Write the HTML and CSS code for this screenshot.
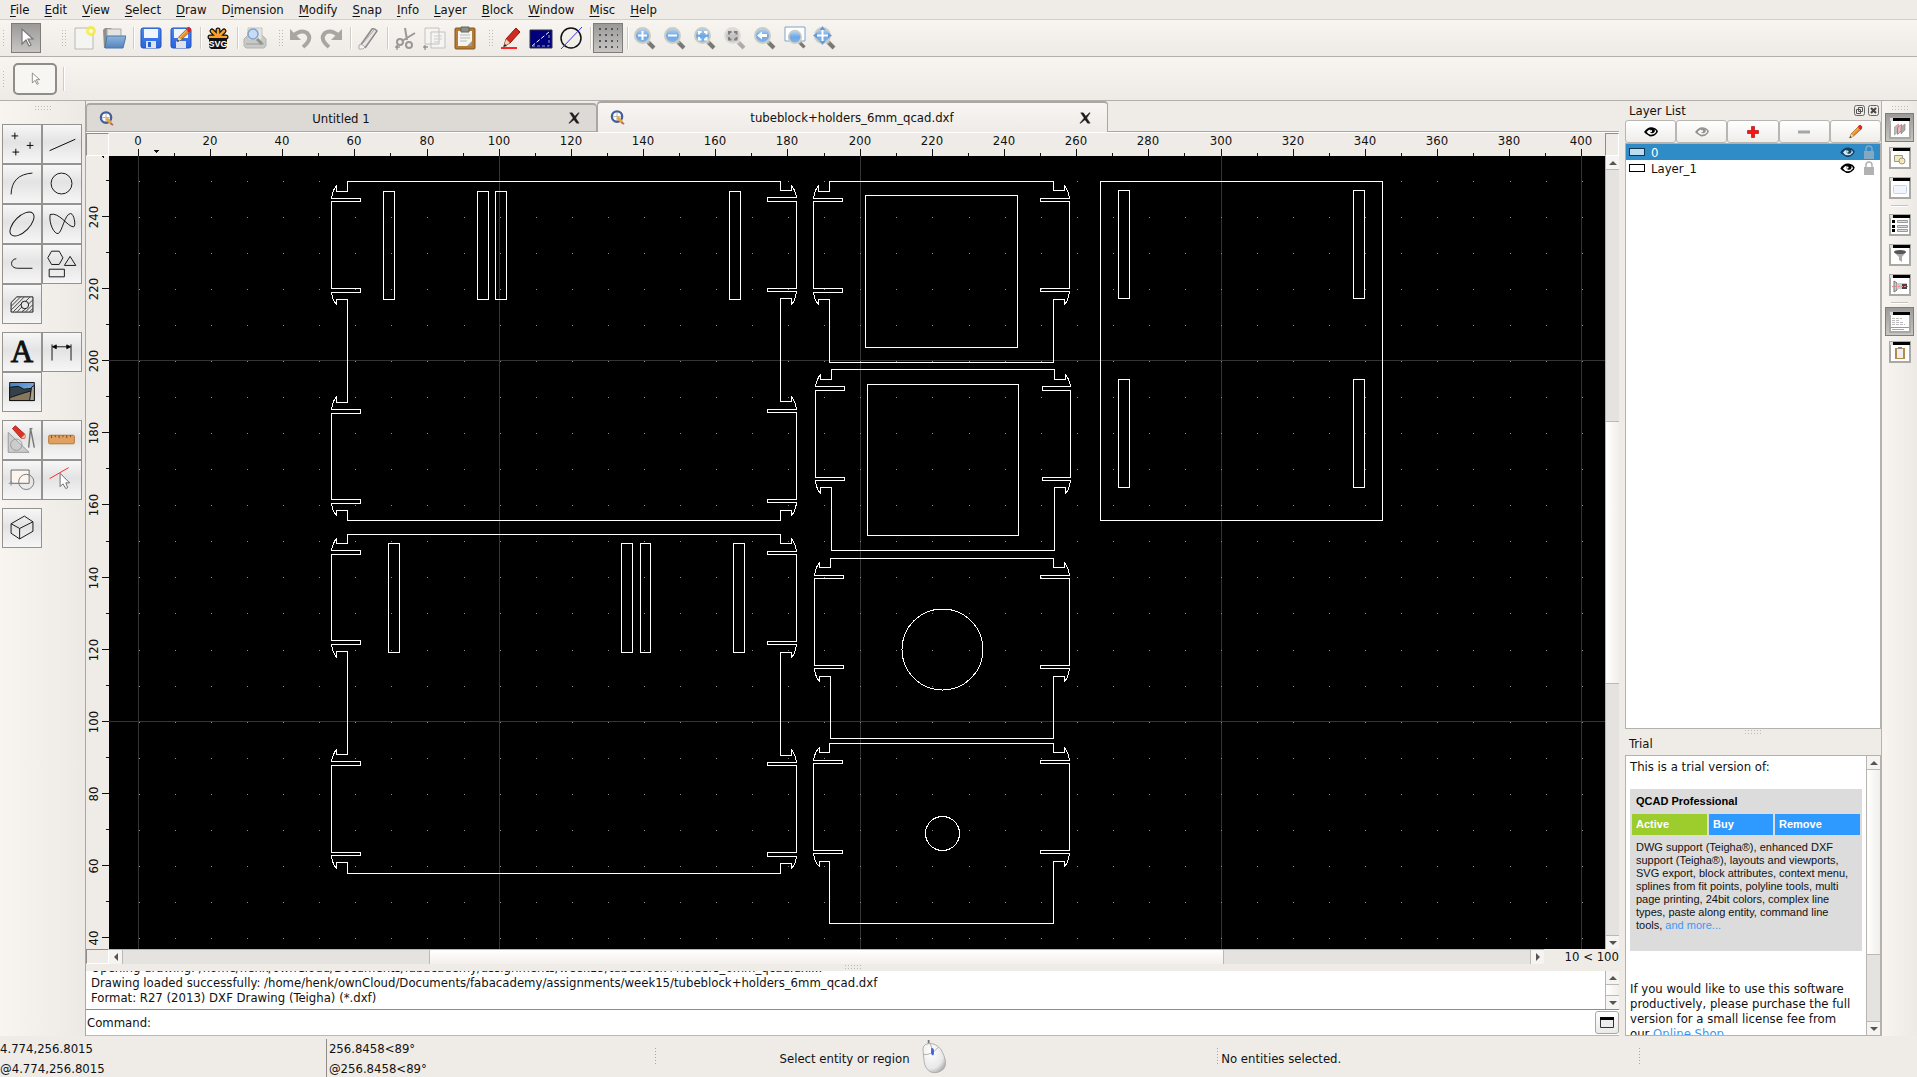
FILE: index.html
```html
<!DOCTYPE html>
<html lang="en">
<head>
<meta charset="utf-8">
<title>QCAD - tubeblock+holders_6mm_qcad.dxf</title>
<link rel="stylesheet" href="styles.css">
</head>
<body>
<svg class="defs" aria-hidden="true">
  <defs>
    <linearGradient id="lens" x1="0" y1="0" x2="0" y2="1"><stop offset="0" stop-color="#bcd8f5"/><stop offset=".5" stop-color="#6fa8e4"/><stop offset="1" stop-color="#7fb2ea"/></linearGradient>
    <linearGradient id="folder" x1="0" y1="0" x2="0" y2="1"><stop offset="0" stop-color="#8fb5dc"/><stop offset="1" stop-color="#5585bd"/></linearGradient>
    <linearGradient id="blue" x1="0" y1="0" x2="0" y2="1"><stop offset="0" stop-color="#4a8af5"/><stop offset="1" stop-color="#2a62dd"/></linearGradient>
    <linearGradient id="sky" x1="0" y1="0" x2="1" y2="1"><stop offset="0" stop-color="#3d7ec4"/><stop offset="1" stop-color="#9cc4ea"/></linearGradient>
    <radialGradient id="mousebody" cx=".35" cy=".3" r=".8"><stop offset="0" stop-color="#fff"/><stop offset=".7" stop-color="#e8e8e8"/><stop offset="1" stop-color="#a8a8a8"/></radialGradient>
    <symbol id="glass" viewBox="0 0 24 24"><path d="M15 16l6 6" stroke="#777972" stroke-width="4"/><path d="M14 15l2 2" stroke="#b9bcb2" stroke-width="3"/><circle cx="9.500" cy="9.500" r="7.500" fill="url(#lens)" stroke="#c9cdc6" stroke-width="2"/></symbol>
    <symbol id="arrow" viewBox="0 0 24 24"><path d="M8 3v15l4-4 3 6 2-1-3-6h5z" fill="#fff" stroke="#777" stroke-width="1.200"/></symbol>
    <symbol id="win" viewBox="0 0 22 22"><rect x="1" y="1" width="20" height="20" fill="#fff" stroke="#aaa8a5" stroke-width="2"/><path d="M1 1h20v3H1z" fill="#000"/><path d="M1 1h3v3H1z" fill="#ddd"/></symbol>
    <symbol id="eye" viewBox="0 0 16 12"><path d="M0 6Q4 0 9 .5 14 1 16 5l-1 2Q12 11 7 11L2 8z"/><path d="M3 6q2-3 4-3-1 3 1 4 3 1 4-1 1-1 0-3 2 1 2 3-2 3-6 3Q5 9 3 6z" fill="#fff"/><circle cx="8" cy="5" r="1.200" fill="#fff"/></symbol>
    <symbol id="lock" viewBox="0 0 10 14"><path d="M2 7V4a3 3 0 0 1 6 0v3" fill="none" stroke="currentColor" stroke-width="1.500"/><path d="M0 6h10v8H0z" fill="currentColor"/></symbol>
    <symbol id="pen" viewBox="0 0 24 24"><path d="M4 21l2-6L18 3l4 4L10 18z" fill="#e8912a" stroke="#8a5a20"/><path d="M16 5l2-3 2-1 3 3-1 3-2 2z" fill="#d22"/><path d="M4 21l2-6 4 3z" fill="#f3d9a8"/><path d="M4 21l1-3 2 2z" fill="#222"/><path d="M8 15L18 5" stroke="#ffd37a"/></symbol>
    <symbol id="qcad" viewBox="0 0 16 16"><circle cx="7.500" cy="7" r="5.500" fill="#fff" stroke="#44609c" stroke-width="2.500"/><path d="M7.500 3v8M3.500 7h8" stroke="#b8b0a8"/><path d="M8 8l5 5" stroke="#f0a52c" stroke-width="3"/><path d="M12 13l3 2" stroke="#b66" stroke-width="2"/></symbol>
    <symbol id="close" viewBox="0 0 14 14"><path d="M2 1h3l3 4 4-4h1L9 7l4 6h-3L7 9l-5 4H1l5-6z" fill="#1d1d1d" stroke="#1d1d1d" stroke-width=".5"/></symbol>
  </defs>
</svg>
<div class="app">
  <nav class="menubar" aria-label="Main menu">
    <button><u>F</u>ile</button><button><u>E</u>dit</button><button><u>V</u>iew</button><button><u>S</u>elect</button><button><u>D</u>raw</button><button>D<u>i</u>mension</button><button><u>M</u>odify</button><button><u>S</u>nap</button><button><u>I</u>nfo</button><button><u>L</u>ayer</button><button><u>B</u>lock</button><button><u>W</u>indow</button><button><u>M</u>isc</button><button><u>H</u>elp</button>
  </nav>

  <div class="toolbar" role="toolbar" aria-label="Main tools">
    <span class="grip first"></span>
    <button class="tool pressed" aria-label="Select"><svg viewBox="0 0 24 24"><use href="#arrow"/></svg></button>
    <span class="grip wide"></span>
    <button class="tool" aria-label="New"><svg viewBox="0 0 24 24"><path d="M3 2h18v21H3z" fill="#f4f4f0" stroke="#b9b9b4"/><circle cx="19" cy="5" r="5" fill="#f5ec3a" opacity=".8"/><circle cx="19" cy="5" r="2" fill="#fffde0"/></svg></button>
    <button class="tool" aria-label="Open"><svg viewBox="0 0 24 24"><path d="M1 4l2-2h6l2 2h8v18H2z" fill="#8d8f8b"/><path d="M5 3h14v8H5z" fill="#e4e4e2" stroke="#aaa"/><path d="M5 10h19l-3 12H3z" fill="url(#folder)" stroke="#4a76a8"/></svg></button>
    <span class="sep"></span>
    <button class="tool" aria-label="Save"><svg viewBox="0 0 24 24"><rect x="2" y="2" width="20" height="20" rx="2" fill="url(#blue)" stroke="#2353b8"/><path d="M5 3h14v9H5z" fill="#f2f5fb"/><path d="M7 15h10v7H7z" fill="#dde3ee"/><path d="M9 16h3v5H9z" fill="#2a5fc8"/></svg></button>
    <button class="tool" aria-label="Save as"><svg viewBox="0 0 24 24"><rect x="2" y="2" width="20" height="20" rx="2" fill="url(#blue)" stroke="#2353b8"/><path d="M5 3h14v9H5z" fill="#f2f5fb"/><path d="M7 15h10v7H7z" fill="#dde3ee"/><use href="#pen" x="5" y="0" width="18" height="18"/></svg></button>
    <span class="sep"></span>
    <button class="tool" aria-label="Export SVG"><svg viewBox="0 0 24 24"><g stroke="#111" stroke-width="5" stroke-linecap="round"><path d="M12 11V4M12 11L6 5M12 11l6-6M12 11H4M12 11h8"/></g><g stroke="#f5a12a" stroke-width="2.500" stroke-linecap="round"><path d="M12 11V4M12 11L6 5M12 11l6-6M12 11H4M12 11h8"/></g><path d="M3 12h18v9l-2 2H5l-2-2z" fill="#111"/><text x="12" y="21" class="svg-badge">SVG</text></svg></button>
    <span class="sep"></span>
    <button class="tool" aria-label="Print preview"><svg viewBox="0 0 24 24"><path d="M1 13l4-4h14l4 4v7l-2 2H3l-2-2z" fill="#c9cac8" stroke="#b2b3b0"/><path d="M5 2h14v12H5z" fill="#e3e4e2" stroke="#c5c5c2"/><path d="M3 18h18" stroke="#9d9e9b"/><path d="M14 13l5 5" stroke="#90928c" stroke-width="3"/><circle cx="10" cy="8" r="5" fill="#c7dcf4" stroke="#7fa4cc" stroke-width="1.500"/></svg></button>
    <span class="grip"></span>
    <button class="tool" aria-label="Undo"><svg viewBox="0 0 24 24"><path d="M4 10q8-7 14-3 6 6-4 14" fill="none" stroke="#a9a6a2" stroke-width="4"/><path d="M1 3v11h11z" fill="#a9a6a2"/></svg></button>
    <button class="tool" aria-label="Redo"><svg viewBox="0 0 24 24"><path d="M20 10q-8-7-14-3-6 6 4 14" fill="none" stroke="#a9a6a2" stroke-width="4"/><path d="M23 3v11H12z" fill="#a9a6a2"/></svg></button>
    <span class="sep"></span>
    <button class="tool" aria-label="Erase"><svg viewBox="0 0 24 24"><path d="M4 20L16 3q3-1 5 2L9 22" fill="#e8e6e3" stroke="#8d8b88" stroke-width="1.500"/><path d="M7 17L18 4M3 19q3-2 6 2l-2 2H3z" stroke="#aaa" fill="#f5f5f5"/></svg></button>
    <span class="sep"></span>
    <button class="tool" aria-label="Cut"><svg viewBox="0 0 24 24" fill="none" stroke="#9b9995" stroke-width="2"><path d="M12 2l2 12M22 7L9 15"/><circle cx="7" cy="16" r="3"/><circle cx="16" cy="19" r="3"/><path d="M2 21h5M4 19v5" stroke="#777" stroke-width="1"/></svg></button>
    <button class="tool" aria-label="Copy"><svg viewBox="0 0 24 24"><path d="M2 2h14v16H2zM8 6h14v16H8z" fill="#f5f4f2" stroke="#c3c1be"/><path d="M11 10h8M11 13h8M11 16h5" stroke="#cfcdca"/><path d="M0 21h5M2 19v5" stroke="#777"/></svg></button>
    <button class="tool" aria-label="Paste"><svg viewBox="0 0 24 24"><rect x="2" y="2" width="20" height="21" rx="1" fill="#b37b35" stroke="#84571f"/><path d="M5 5h14v15H5z" fill="#f4f4f1"/><path d="M8 1h8v5H8z" fill="#8d8f8a" stroke="#63655f"/><path d="M7 9h10M7 12h10M7 15h7" stroke="#bbb"/><path d="M14 20l5-5v5z" fill="#999"/></svg></button>
    <span class="grip"></span>
    <button class="tool" aria-label="Draft pen"><svg viewBox="0 0 24 24"><path d="M5 20l2-7L17 2l4 4-10 11z" fill="#cf2a20" stroke="#8f1510"/><path d="M5 20l2-7 4 4z" fill="#eed3ad"/><path d="M4 21l2-3 2 2z" fill="#222"/><path d="M2 22h16" stroke="#f22" stroke-width="2"/></svg></button>
    <button class="tool" aria-label="Screen weight"><svg viewBox="0 0 24 24"><path d="M1 4h22v18H1z" fill="#00007c" stroke="#334"/><path d="M3 20L20 6" stroke="#fff" stroke-dasharray="4 2"/><path d="M3 20h17V7" fill="none" stroke="#9ab" stroke-dasharray="3 2"/></svg></button>
    <button class="tool" aria-label="Antialiasing"><svg viewBox="0 0 24 24" fill="none"><circle cx="12" cy="12" r="10" stroke="#111" stroke-width="1.500"/><path d="M2 23L23 1" stroke="#3a35f0"/></svg></button>
    <span class="sep"></span>
    <button class="tool pressed" aria-label="Grid"><svg viewBox="0 0 24 24"><path d="M3 3h19M3 9h19M3 15h19M3 21h19" stroke="#555" stroke-width="2" stroke-dasharray="2 4"/></svg></button>
    <span class="sep"></span>
    <button class="tool" aria-label="Zoom in"><svg viewBox="0 0 24 24"><use href="#glass"/><path d="M9.500 5v9M5 9.500h9" stroke="#fff" stroke-width="2"/></svg></button>
    <button class="tool" aria-label="Zoom out"><svg viewBox="0 0 24 24"><use href="#glass"/><path d="M5 9.500h9" stroke="#fff" stroke-width="2"/></svg></button>
    <button class="tool" aria-label="Auto zoom"><svg viewBox="0 0 24 24"><use href="#glass"/><path d="M6 8.500V6h2.500M11 6h2.500v2.500M13.500 11v2.500H11M8.500 13.500H6V11" fill="none" stroke="#fff" stroke-width="2"/></svg></button>
    <button class="tool faded" aria-label="Zoom to selection"><svg viewBox="0 0 24 24"><use href="#glass"/><path d="M6 8.500V6h2.500M11 6h2.500v2.500M13.500 11v2.500H11M8.500 13.500H6V11" fill="none" stroke="#222" stroke-width="2"/></svg></button>
    <button class="tool" aria-label="Previous view"><svg viewBox="0 0 24 24"><use href="#glass"/><path d="M4 9.500l5-4v2.500h5v3H9v2.500z" fill="#fff"/></svg></button>
    <button class="tool" aria-label="Window zoom"><svg viewBox="0 0 24 24"><path d="M2 1h20v14H2z" fill="#fff" stroke="#7fa3cc"/><use href="#glass" x="4" y="3" width="20" height="20"/></svg></button>
    <button class="tool" aria-label="Pan"><svg viewBox="0 0 24 24"><use href="#glass"/><path d="M9.500 1v17M1 9.500h17" stroke="#fff" stroke-width="2"/><path d="M9.500 0l3 4h-6zM9.500 19l3-4h-6zM0 9.500l4-3v6zM19 9.500l-4-3v6z" fill="#6a99d4"/></svg></button>
  </div>

  <div class="options" role="toolbar" aria-label="Tool options">
    <span class="grip first"></span>
    <button class="option" aria-label="Selection tool"><svg viewBox="0 0 24 24"><use href="#arrow"/></svg></button>
    <span class="sep"></span>
  </div>

  <div class="body">
    <aside class="toolbox" aria-label="CAD tools">
      <span class="grip-h"></span>
      <div class="tools">
        <button class="cad more" aria-label="Points"><svg viewBox="0 0 40 40"><path d="M9 11.500h7M12.500 8v7M25 21.500h7M28.500 18v7M10 28.500h7M13.500 25v7" stroke="#000"/></svg></button>
        <button class="cad more" aria-label="Lines"><svg viewBox="0 0 40 40"><path d="M7 27L34 15" stroke="#000"/></svg></button>
        <button class="cad more" aria-label="Arcs"><svg viewBox="0 0 40 40"><path d="M8.500 31Q9 10 31 8.500"/></svg></button>
        <button class="cad more" aria-label="Circles"><svg viewBox="0 0 40 40"><circle cx="19.500" cy="19.500" r="11"/></svg></button>
        <button class="cad more" aria-label="Ellipses"><svg viewBox="0 0 40 40"><ellipse cx="20" cy="20" rx="16" ry="8" transform="rotate(-45 20 20)"/></svg></button>
        <button class="cad more" aria-label="Splines"><svg viewBox="0 0 40 40"><path d="M7.500 10C6 20 12 31 16 30S23 9 29 9c4 0 6 14 3 14C26 23 17 7 7.500 10"/></svg></button>
        <button class="cad more" aria-label="Polylines"><svg viewBox="0 0 40 40"><path d="M14 14.500c-6 0-8 10 2 10h15"/></svg></button>
        <button class="cad more" aria-label="Shapes"><svg viewBox="0 0 40 40"><path d="M9 6.500h8l4 7-4 7H9l-4-7zM28.500 12l6 9.500h-12zM6.500 25.500h16v8h-16z"/></svg></button>
        <button class="cad more" aria-label="Hatch"><svg viewBox="0 0 40 40"><path d="M8.500 18.500l6-6h17v16h-23z"/><circle cx="23" cy="21" r="4"/><path d="M9 22l9-9M9 26l13-13M11 28l8-8M15 28l5-5M24 17l4-4M20 28l4-3M24 28l7-7M27 20l4-4M28 28l3-3" stroke-width=".8"/></svg></button>
      </div>
      <div class="tools">
        <button class="cad letter" aria-label="Text">A</button>
        <button class="cad more" aria-label="Dimensions"><svg viewBox="0 0 40 40"><path d="M9.500 12v17M29.500 12v17M10 14.500h19"/><path d="M10 14.500l4-2v4zM29 14.500l-4-2v4z" fill="#000"/></svg></button>
        <button class="cad" aria-label="Image"><svg viewBox="0 0 40 40" stroke="none"><path d="M7 10h26v19H7z" fill="url(#sky)"/><path d="M7 15l9-1 6 3 9-1v6L14 28H7z" fill="#34404a"/><path d="M22 21l7-2 1 10H7v-3z" fill="#85785e"/><path d="M28 29l2-14 3-2v16z" fill="#aaa392"/></svg></button>
      </div>
      <div class="tools">
        <button class="cad more" aria-label="Modify"><svg viewBox="0 0 40 40"><path d="M5.500 12v21h22z" fill="#ccc" stroke="#999"/><circle cx="14" cy="25" r="6" stroke="#999"/><path d="M27 28l2-20 4 20M28 8h3" stroke="#777" stroke-width="1.500"/><path d="M10 8l3-3 10 9v4h-4z" fill="#d32" stroke="#a22"/><path d="M19 18h4v-4z" fill="#e8c999" stroke="none"/></svg></button>
        <button class="cad more" aria-label="Measure"><svg viewBox="0 0 40 40"><rect x="6" y="15" width="27" height="9" rx="1" fill="#e0a060" stroke="#b47436"/><path d="M9 15v3M13 15v2M17 15v3M21 15v2M25 15v3M29 15v2" stroke="#7a4a1c"/></svg></button>
        <button class="cad" aria-label="Blocks"><svg viewBox="0 0 40 40"><path d="M8.500 9.500h19v14h-19z" fill="#fbf5ee" stroke="#666"/><circle cx="24.500" cy="22" r="8" stroke="#777"/><path d="M6 23.500h5M8.500 21v5" stroke="#888"/></svg></button>
        <button class="cad more" aria-label="Selection"><svg viewBox="0 0 40 40"><path d="M7 18.500L27 7" stroke="#f22"/><path d="M18 13v14l3-3 3 5 2-1-2-5h4z" fill="#fff" stroke="#666"/></svg></button>
      </div>
      <div class="tools">
        <button class="cad more" aria-label="3D projection"><svg viewBox="0 0 40 40"><path d="M8.500 15.500l14-8 9 6v10l-14 8-9-6zM8.500 15.500l9 5 14-7M17.500 20.500v11"/></svg></button>
      </div>
    </aside>

    <main class="center">
      <div class="tabs" role="tablist">
        <div class="tab" role="tab" aria-selected="false"><svg class="doc" viewBox="0 0 16 16"><use href="#qcad"/></svg><span class="name">Untitled 1</span><button class="shut" aria-label="Close Untitled 1"><svg viewBox="0 0 14 14"><use href="#close"/></svg></button></div>
        <div class="tab active" role="tab" aria-selected="true"><svg class="doc" viewBox="0 0 16 16"><use href="#qcad"/></svg><span class="name">tubeblock+holders_6mm_qcad.dxf</span><button class="shut" aria-label="Close drawing"><svg viewBox="0 0 14 14"><use href="#close"/></svg></button></div>
      </div>
      <div class="viewport">
        <span class="corner"></span>
        <svg class="ruler" id="ruler-x"></svg>
        <span class="corner"></span>
        <svg class="ruler" id="ruler-y"></svg>
        <svg class="canvas" role="img" aria-label="Drawing">
          <path id="grid" class="grid"/>
          <path id="dots" class="dots"/>
          <g class="lines" transform="translate(-108.500 -155.500)">
            <path d="M347 181V191H336V185Q332 190 331 198H360V201H331V288H360V292H331Q332 300 336 304V299H347V402H336V396Q332 401 331 409H360V413H331V499H360V503H331Q332 511 336 515V510H347V520H780V510H791V515Q795 511 796 502H767V499H796V412H767V409H796Q795 401 791 396V401H780V298H791V304Q795 300 796 291H767V288H796V201H767V197H796Q795 190 791 185V190H780V181Z"/>
            <path d="M383 191h11v108h-11zM477 191h11v108h-11zM495 191h11v108h-11zM729 191h11v108h-11z"/>
            <path d="M347 534V543H336V538Q332 543 331 550H360V554H331V640H360V644H331Q332 652 336 657V651H347V754H336V749Q332 754 331 761H360V765H331V852H360V855H331Q332 864 336 868V862H347V873H780V863H791V868Q795 864 796 856H767V852H796V765H767V762H796Q795 754 791 749V755H780V652H791V657Q795 653 796 644H767V641H796V554H767V551H796Q795 543 791 538V543H780V534Z"/>
            <path d="M388 543h11v109h-11zM621 543h11v109h-11zM640 543h10v109h-10zM733 543h11v109h-11z"/>
            <path d="M829 181V191H818V185Q814 190 813 198H842V201H813V288H842V292H813Q814 300 818 304V299H829V362H1053V299H1064V304Q1068 300 1069 291H1040V288H1069V201H1040V198H1069Q1068 190 1064 185V190H1053V181Z"/>
            <path d="M865 195h152v152H865z"/>
            <path d="M831 369V379H820V374Q816 379 815 386H844V390H815V477H844V480H815Q816 489 820 493V487H831V550H1054V487H1065V493Q1069 489 1070 480H1042V477H1070V390H1042V386H1070Q1069 379 1065 374V379H1054V369Z"/>
            <path d="M867 384h151v151H867z"/>
            <path d="M830 558V567H819V562Q815 567 814 575H843V578H814V665H843V668H814Q815 677 819 681V676H830V738H1053V676H1064V681Q1068 677 1069 668H1040V665H1069V578H1040V575H1069Q1068 567 1064 562V567H1053V558Z"/>
            <circle cx="942" cy="649" r="40.500"/>
            <path d="M829 743V752H819V747Q814 752 813 760H842V763H813V850H842V853H813Q814 862 819 866V861H829V923H1053V861H1064V866Q1068 862 1069 853H1040V850H1069V763H1040V760H1069Q1068 752 1064 747V752H1053V743Z"/>
            <circle cx="942" cy="833" r="17"/>
            <path d="M1100 181h282v339h-282zM1118 190h11v108h-11zM1353 190h11v108h-11zM1118 379h11v108h-11zM1353 379h11v108h-11z"/>
          </g>
        </svg>
        <div class="scroll vertical canvas-v"><button aria-label="Scroll up"><i class="up"></i></button><span class="groove"></span><span class="thumb"></span><span class="groove"></span><button aria-label="Scroll down"><i class="down"></i></button></div>
        <div class="bottom">
          <span class="corner"></span>
          <div class="scroll horizontal"><button aria-label="Scroll left"><i class="left"></i></button><span class="groove"></span><span class="thumb"></span><span class="groove"></span><button aria-label="Scroll right"><i class="right"></i></button></div>
          <span class="gridinfo">10 &lt; 100</span>
        </div>
      </div>
      <div class="splitter"><span class="grip-h"></span></div>
      <section class="console" aria-label="Command line">
        <div class="history">
          <div class="log">
            <p>Opening drawing: /home/henk/ownCloud/Documents/fabacademy/assignments/week15/tubeblock+holders_6mm_qcad.dxf...</p>
            <p>Drawing loaded successfully: /home/henk/ownCloud/Documents/fabacademy/assignments/week15/tubeblock+holders_6mm_qcad.dxf</p>
            <p>Format: R27 (2013) DXF Drawing (Teigha) (*.dxf)</p>
          </div>
          <div class="scroll vertical"><button aria-label="Scroll up"><i class="up"></i></button><span class="thumb"></span><button aria-label="Scroll down"><i class="down"></i></button></div>
        </div>
        <div class="prompt">
          <label for="command">Command:</label><input id="command" type="text">
          <button class="detach" aria-label="Open console window"><svg viewBox="0 0 14 11"><path d="M.5.500h13v10H.5z" fill="#eee" stroke="#333"/><path d="M0 0h14v3H0z"/></svg></button>
        </div>
      </section>
    </main>

    <aside class="dock">
      <header class="dock-title">Layer List
        <span class="dock-buttons">
          <button aria-label="Float"><svg viewBox="0 0 11 11"><rect x=".5" y=".5" width="10" height="10" rx="2" fill="none" stroke="#666"/><path d="M4.500 2.500h4v4h-4zM2.500 4.500h4v4h-4z" fill="#eee" stroke="#555"/></svg></button>
          <button aria-label="Close"><svg viewBox="0 0 11 11"><rect x=".5" y=".5" width="10" height="10" rx="2" fill="none" stroke="#666"/><path d="M3 3l5 5M8 3l-5 5" stroke="#444" stroke-width="2"/></svg></button>
        </span>
      </header>
      <div class="layer-tools">
        <button aria-label="Show all layers"><svg viewBox="0 0 16 12"><use href="#eye"/></svg></button>
        <button class="dim" aria-label="Hide all layers"><svg viewBox="0 0 16 12"><use href="#eye"/></svg></button>
        <button aria-label="Add layer"><svg viewBox="0 0 12 12"><path d="M4.500.500h3v4h4v3h-4v4h-3v-4h-4v-3h4z" fill="#f11" stroke="#900" stroke-width=".6"/></svg></button>
        <button aria-label="Remove layer"><svg viewBox="0 0 12 12"><path d="M0 4.500h12v3H0z" fill="#a5a5a5"/></svg></button>
        <button aria-label="Edit layer"><svg class="big" viewBox="0 0 24 24"><use href="#pen"/></svg></button>
      </div>
      <ul class="layers">
        <li class="current"><span class="swatch"></span><span class="name">0</span><svg class="eye" viewBox="0 0 16 12"><use href="#eye"/></svg><svg class="lock" viewBox="0 0 10 14"><use href="#lock"/></svg></li>
        <li><span class="swatch"></span><span class="name">Layer_1</span><svg class="eye" viewBox="0 0 16 12"><use href="#eye"/></svg><svg class="lock" viewBox="0 0 10 14"><use href="#lock"/></svg></li>
      </ul>
      <div class="splitter"><span class="grip-h"></span></div>
      <header class="dock-title trial-title">Trial</header>
      <section class="trial">
        <div class="trial-text">
          <p class="intro">This is a trial version of:</p>
          <div class="product">
            <h2>QCAD Professional</h2>
            <div class="actions"><button class="on">Active</button><button>Buy</button><button>Remove</button></div>
            <p>DWG support (Teigha®), enhanced DXF support (Teigha®), layouts and viewports, SVG export, block attributes, context menu, splines from fit points, polyline tools, multi page printing, 24bit colors, complex line types, paste along entity, command line tools, <a href="#more">and more...</a></p>
          </div>
          <p class="offer">If you would like to use this software productively, please purchase the full version for a small license fee from our <a href="#shop">Online Shop</a>.</p>
        </div>
        <div class="scroll vertical trial-v"><button aria-label="Scroll up"><i class="up"></i></button><span class="thumb"></span><span class="groove"></span><button aria-label="Scroll down"><i class="down"></i></button></div>
      </section>
    </aside>

    <aside class="rail" aria-label="Panels">
      <span class="grip-h"></span>
      <button class="panel pressed" aria-label="Layer list"><svg viewBox="0 0 22 22"><use href="#win"/><path d="M5.500 10l4-3v7l-4 4z" fill="#bbb" stroke="#999" stroke-width=".7"/><path d="M8.500 10.500l4-3v6l-4 4z" fill="#f3b5b5" stroke="#d55" stroke-width=".8"/><path d="M12 10l4-3v6l-4 4z" fill="#aaa" stroke="#888" stroke-width=".7"/></svg></button>
      <button class="panel" aria-label="Block list"><svg viewBox="0 0 22 22"><use href="#win"/><path d="M5.500 8.500h8v6h-8z" fill="#f4e7b9" stroke="#998"/><circle cx="13" cy="14" r="3" fill="#f4e7b9" stroke="#998"/></svg></button>
      <button class="panel" aria-label="View list"><svg viewBox="0 0 22 22"><use href="#win"/><rect x="4.500" y="8.500" width="13" height="8" rx="1" fill="#f2f5fb" stroke="#c9d3e6"/></svg></button>
      <span class="rule"></span>
      <button class="panel" aria-label="Property editor"><svg viewBox="0 0 22 22"><use href="#win"/><path d="M3 6h3v3H3zM3 11h3v3H3zM3 15h3v3H3z"/><path d="M8.500 6.500h10v2h-10zM8.500 11.500h10v2h-10zM8.500 15.500h10v2h-10z" fill="#ddd" stroke="#999"/></svg></button>
      <button class="panel" aria-label="Selection filter"><svg viewBox="0 0 22 22"><use href="#win"/><path d="M5 8h12l-4 5v5l-3-2v-3z" fill="#aaa"/><ellipse cx="11" cy="8" rx="6" ry="2" fill="#555"/></svg></button>
      <button class="panel" aria-label="Part library"><svg viewBox="0 0 22 22"><use href="#win"/><path d="M5 7l3 2v7l-3 2z" fill="#ccc" stroke="#777"/><path d="M8 9h10v6H8z" fill="#ccc"/><path d="M13 10h5v5h-5z" fill="#444"/><path d="M3 12.500h16" stroke="#e88" stroke-dasharray="2 1"/></svg></button>
      <span class="rule"></span>
      <button class="panel pressed" aria-label="Command line"><svg viewBox="0 0 22 22"><use href="#win"/><path d="M3 7.500h10M3 9.500h7M3 11.500h12M3 13.500h13" stroke="#bbb" stroke-dasharray="3 1"/><path d="M2 16.500h18" stroke="#999"/><path d="M3 18.500h12" stroke="#aaa"/></svg></button>
      <button class="panel" aria-label="Clipboard"><svg viewBox="0 0 22 22"><use href="#win"/><path d="M6 7h10v11H6z" fill="#b58b4c"/><path d="M8 8h6v9H8z" fill="#eee"/><path d="M9 6h4v2H9z" fill="#888"/></svg></button>
    </aside>
  </div>

  <footer class="status">
    <div class="cell coords"><span>4.774,256.8015</span><span>@4.774,256.8015</span></div>
    <div class="cell polar"><span>256.8458&lt;89°</span><span>@256.8458&lt;89°</span></div>
    <div class="cell hint"><i class="dotline"></i><span>Select entity or region</span>
      <svg viewBox="0 0 28 38"><path d="M8 0v6" stroke="#777" stroke-width="2"/><path d="M2 14Q0 5 8 4t14 7q8 14 3 21-6 6-14 4Q4 33 3 24z" fill="url(#mousebody)" stroke="#aaa"/><path d="M2 16q8 2 17-8M10 4l3 11" fill="none" stroke="#aaa"/><path d="M11 9q3-1 3 4t-2 4-1-8" fill="#4565d0"/></svg>
    </div>
    <div class="cell selection"><i class="dotline"></i><span>No entities selected.</span></div>
    <i class="dotline"></i>
  </footer>
</div>
<script src="rulers.js"></script>
</body>
</html>
```

FILE: styles.css
```css
* { box-sizing: border-box; }
html, body { height: 100%; margin: 0; }
body {
  font: 13px/15px "DejaVu Sans Condensed", "DejaVu Sans", sans-serif;
  color: #111;
  background: #efebe7;
}
button { font: inherit; color: inherit; border: 0; padding: 0; margin: 0; background: none; }
p, h2, ul { margin: 0; padding: 0; }
a { color: #3b98f5; text-decoration: none; }
svg { display: block; }
.defs { position: absolute; width: 0; height: 0; }

.app { display: flex; flex-direction: column; height: 100vh; overflow: hidden; }

/* Menu */
.menubar { display: flex; gap: 15px; height: 20px; padding: 0 10px; border-bottom: 1px solid #d2cec9; flex: none; }
.menubar u { text-underline-offset: 2px; }

/* Toolbars */
.toolbar, .options {
  display: flex; align-items: center; flex: none;
  background: linear-gradient(#f8f5f1, #eeeae6);
  border-bottom: 1px solid #b3afab;
}
.toolbar { height: 37px; }
.options { height: 44px; }
.grip { flex: none; width: 16px; height: 18px; background: radial-gradient(circle, #bdb9b5 1px, transparent 1px) 8px 0 / 3px 3px; background-clip: content-box; padding: 0 3px 0 8px; }
.grip.first { width: 11px; padding: 0 5px 0 2px; }
.grip.wide { width: 28px; padding: 0 3px 0 21px; }
.sep { flex: none; width: 7px; height: 22px; border-left: 1px solid #cfcbc7; margin-left: 4px; margin-right: -4px; box-shadow: inset 1px 0 #fff; }
.tool { flex: none; width: 30px; height: 30px; display: grid; place-items: center; border: 1px solid transparent; }
.tool svg { width: 24px; height: 24px; }
.tool.faded { filter: grayscale(1); opacity: .55; }
.tool.pressed, .panel.pressed { border: 1px solid #7f7c79; background: linear-gradient(#9c9a98, #c8c6c3); }
.svg-badge { font: bold 9px "Liberation Sans", sans-serif; fill: #fff; text-anchor: middle; }
.option { width: 44px; height: 32px; border: 2px solid #8f8c89; border-radius: 5px; background: #f8f6f3; display: grid; place-items: center; margin-left: 2px; }
.option svg { width: 16px; height: 16px; }
.options .sep { margin-left: 6px; height: 24px; }
.grip-h { display: block; flex: none; width: 18px; height: 6px; margin: 0 auto; background: radial-gradient(circle, #bdb9b5 1px, transparent 1px) 0 0 / 3px 3px; }

.body { display: flex; flex: 1; min-height: 0; }

/* Left tool box */
.toolbox { flex: none; width: 86px; padding: 4px 2px; border-right: 1px solid #aaa6a3; background: linear-gradient(90deg, #f8f5f1, #edeae5); }
.toolbox .grip-h { margin: 0 auto 13px; }
.tools { display: grid; grid-template-columns: 40px 40px; margin-bottom: 8px; }
.cad { position: relative; width: 40px; height: 40px; border: 1px solid #959390; background: linear-gradient(#f7f7f7, #e3e3e3 45%, #f6f6f6); }
.cad svg { width: 38px; height: 38px; fill: none; stroke: #111; }
.cad.more::after { content: ""; position: absolute; right: 5px; bottom: 5px; border: solid transparent; border-width: 5px 0 0 5px; width: 0; height: 0; background: linear-gradient(135deg, transparent 50%, #000 50%); }
.cad.letter { font: 31px/36px "Liberation Serif", serif; -webkit-text-stroke: 1px #111; }

/* Document area */
.center { flex: 1; min-width: 0; display: flex; flex-direction: column; margin-right: 6px; }
.tabs { display: flex; align-items: flex-end; flex: none; height: 32px; border-bottom: 1px solid #fff; box-shadow: inset 0 -1px #a9a5a1; }
.tab { flex: 0 0 33.333%; display: flex; align-items: center; height: 29px; padding: 0 16px 0 12px; border: 1px solid #aaa6a2; border-width: 2px 1px 1px; border-radius: 4px 4px 0 0; background: #dddad5; }
.tab.active { height: 31px; border-bottom: 0; background: linear-gradient(#f8f5f2, #efebe7); }
.tab .doc { width: 15px; height: 15px; }
.tab .name { flex: 1; text-align: center; }
.shut svg { width: 12px; height: 12px; }
.viewport { flex: 1; min-height: 0; display: grid; grid-template: 23px minmax(0, 1fr) 15px / 23px minmax(0, 1fr) 14px; }
.corner { display: block; border: 1px solid; border-color: #8f8c89 #fff #fff #8f8c89; }
.ruler, .canvas { width: 100%; height: 100%; overflow: hidden; }
.ruler path { stroke: #111; shape-rendering: crispEdges; }
.ruler text { text-anchor: middle; fill: #111; }
.ruler .marker { stroke: none; fill: #111; }
.canvas { background: #000; }
.grid { stroke: #343434; shape-rendering: crispEdges; }
.dots { fill: #8c8c8c; shape-rendering: crispEdges; }
.lines { fill: none; stroke: #fff; shape-rendering: crispEdges; }
.bottom { grid-column: 1 / 4; display: grid; grid-template-columns: 23px 1fr 75px; }
.gridinfo { text-align: right; }

/* Scroll bars */
.scroll { display: flex; border: 0 solid #b8b4b0; background: #e5e3df; }
.scroll button { flex: none; display: grid; place-items: center; }
.scroll.vertical { flex-direction: column; width: 14px; border-left-width: 1px; }
.scroll.vertical button { height: 14px; background: #f6f4f2; border-bottom: 1px solid #bcb8b4; }
.scroll.vertical button:last-child { border-top: 1px solid #bcb8b4; border-bottom: 0; }
.scroll.horizontal { border-top-width: 1px; }
.scroll.horizontal button { width: 14px; background: #f6f4f2; border-right: 1px solid #bcb8b4; }
.scroll.horizontal button:last-child { border-left: 1px solid #bcb8b4; border-right: 0; }
.groove { flex: 250; }
.thumb { flex: 260; background: linear-gradient(90deg, #fff, #f1efec); }
.vertical .groove + .thumb, .vertical .thumb + .groove { border-top: 1px solid #bcb8b4; }
.horizontal .groove { flex: 307; }
.horizontal .thumb { flex: 794; background: linear-gradient(#fff, #f3f0ed); border: 1px solid #bcb8b4; border-width: 0 1px; }
.trial-v .thumb { flex: 185; }
.trial-v .groove { flex: 67; }
.scroll i { width: 0; height: 0; border: 4px solid transparent; }
.scroll .up { border-bottom-color: #555; border-top: 0; }
.scroll .down { border-top-color: #555; border-bottom: 0; }
.scroll .left { border-right-color: #555; border-left: 0; }
.scroll .right { border-left-color: #555; border-right: 0; }

/* Console */
.splitter { flex: none; height: 7px; }
.console { flex: none; background: #fff; border-bottom: 1px solid #bcb8b4; }
.history { display: flex; height: 39px; border-bottom: 1px solid #8f8c89; }
.log { flex: 1; min-width: 0; overflow: hidden; white-space: nowrap; display: flex; flex-direction: column; justify-content: flex-end; padding: 0 5px 4px; }
.prompt { display: flex; align-items: center; height: 25px; padding-left: 1px; }
.prompt input { flex: 1; min-width: 0; font: inherit; border: 0; outline: 0; background: none; }
.detach { width: 24px; height: 23px; display: grid; place-items: center; border: 1px solid #aaa6a2; border-radius: 3px; background: linear-gradient(#fff, #eceae8); }
.detach svg { width: 14px; height: 11px; }

/* Docks */
.dock { flex: none; width: 256px; display: flex; flex-direction: column; }
.dock-title { flex: none; display: flex; align-items: center; justify-content: space-between; height: 19px; padding: 0 2px 0 4px; }
.dock-buttons { display: flex; gap: 3px; }
.dock-buttons svg { width: 11px; height: 11px; }
.layer-tools { display: grid; grid-template-columns: repeat(5, 1fr); height: 23px; flex: none; }
.layer-tools button { display: grid; place-items: center; border: 1px solid #b9b5b1; border-radius: 3px; background: linear-gradient(#fff, #efedea); }
.layer-tools svg { width: 14px; height: 12px; }
.layer-tools svg.big { width: 16px; height: 16px; }
.layer-tools .dim svg { opacity: .4; }
.layers { flex: 1; min-height: 0; list-style: none; background: #fff; border: 1px solid #b5b1ad; }
.layers li { display: flex; align-items: center; height: 16px; padding: 0 6px 0 3px; }
.layers .swatch { width: 16px; height: 8px; border: 1px solid #000; background: #fff; }
.layers .name { flex: 1; margin-left: 6px; }
.layers .eye { width: 15px; height: 11px; }
.layers .lock { width: 10px; height: 14px; margin-left: 9px; color: #b2b2b2; }
.layers .current { background: #308cc6; color: #fff; }
.current .swatch { background: #bcdcf0; border-color: #12374f; }
.current .eye { fill: #0c2f48; opacity: .8; }
.current .lock { color: #82a8c2; }
.trial-title { height: 19px; align-items: flex-start; }
.trial { flex: none; height: 281px; display: flex; background: #fff; border: 1px solid #b5b1ad; }
.trial-text { flex: 1; min-width: 0; overflow: hidden; padding: 3px 4px 0; }
.intro { margin-bottom: 15px; }
.product { height: 162px; margin-bottom: 30px; padding: 6px 2px; background: #dcdcdc; color: #111; font: 11px/13px "Liberation Sans", sans-serif; }
.product h2 { font: bold 11px/13px "Liberation Sans", sans-serif; color: #000; padding: 0 4px; margin-bottom: 6px; }
.actions { display: grid; grid-template-columns: 75fr 64fr 85fr; gap: 2px; margin-bottom: 6px; }
.actions button { height: 21px; padding-left: 4px; text-align: left; font-weight: bold; color: #fff; background: #2e9aff; }
.actions .on { background: #9ccd2c; }
.product p { padding: 0 4px; }
.offer { padding-right: 4px; }

/* Right rail */
.rail { flex: none; width: 36px; display: flex; flex-direction: column; align-items: center; gap: 1px; padding-top: 4px; border-left: 1px solid #b5b1ad; background: linear-gradient(90deg, #f8f5f1, #edeae5); }
.rail .grip-h { margin: 0 auto 1px; }
.panel { flex: none; width: 29px; height: 29px; display: grid; place-items: center; border: 1px solid transparent; }
.panel svg { width: 22px; height: 22px; }
.rule { flex: none; width: 17px; height: 2px; margin: 2px 0; border-top: 1px solid #c6c2be; background: #fff; }

/* Status bar */
.status { flex: none; display: flex; height: 41px; }
.cell { display: flex; }
.coords, .polar { flex-direction: column; justify-content: space-between; padding: 5px 0 1px; }
.coords { flex: 0 0 17%; }
.polar { flex: 0 0 17%; margin-top: 3px; padding-top: 2px; padding-left: 2px; border-left: 1px solid #8f8c89; }
.hint { flex: 0 0 29.5%; align-items: center; padding-left: 3px; }
.hint span { margin-left: 22%; }
.hint svg { width: 28px; height: 34px; margin-left: 10px; }
.selection { align-items: center; flex: 0 0 22%; gap: 3px; }
.status .cell.hint span, .selection span { padding-top: 3px; }
.dotline { flex: none; width: 1px; height: 18px; align-self: center; background: repeating-linear-gradient(#aaa6a2 0 1px, transparent 1px 3px); }
```

FILE: rulers.js
```js
// Draws the grid, the grid points and both rulers for the visible part of the drawing.
const SCALE = 3.609;      // pixels per drawing unit
const ORIGIN_X = 29;      // drawing x = 0, in canvas pixels
const ORIGIN_Y = 926;     // drawing y = 0, in canvas pixels
const NS = "http://www.w3.org/2000/svg";

const canvas = document.querySelector(".canvas");

function label(svg, x, y, text, vertical) {
  const t = document.createElementNS(NS, "text");
  t.textContent = text;
  t.setAttribute("x", x);
  t.setAttribute("y", y);
  if (vertical) t.setAttribute("transform", `rotate(-90 ${x} ${y})`);
  svg.append(t);
}

function path(svg, d, cls) {
  const p = document.createElementNS(NS, "path");
  p.setAttribute("d", d);
  if (cls) p.setAttribute("class", cls);
  svg.append(p);
}

function draw() {
  const { width, height } = canvas.getBoundingClientRect();
  const rx = document.getElementById("ruler-x");
  const ry = document.getElementById("ruler-y");
  rx.replaceChildren();
  ry.replaceChildren();
  let grid = "", dots = "", tx = "", ty = "";
  const xs = [], ys = [];

  for (let u = 0; ORIGIN_X + u * SCALE < width; u += 10) {
    const x = Math.floor(ORIGIN_X + u * SCALE + 0.35);
    xs.push(Math.round(ORIGIN_X + 0.9 + u * 3.607));
    tx += `M${x + 0.5} ${u % 20 ? 20 : 16}V23`;
    if (u % 20 === 0) label(rx, x, 12, u);
    if (u % 100 === 0) grid += `M${x + 0.5} 0V${height}`;
  }
  const first = Math.ceil((ORIGIN_Y - height) / SCALE / 10) * 10;
  for (let u = first; ORIGIN_Y - u * SCALE > 0; u += 10) {
    const y = Math.floor(ORIGIN_Y - u * SCALE + 0.35);
    if (u <= 250) ys.push(Math.round(24.6 + (250 - u) * 3.607));
    ty += `M${u % 20 ? 20 : 16} ${y + 0.5}H23`;
    if (u % 20 === 0) label(ry, 12, y + 1, u, true);
    if (u % 100 === 0) grid += `M0 ${y + 0.5}H${width}`;
  }
  for (const y of ys) for (const x of xs) dots += `M${x} ${y}h1v1h-1z`;

  path(rx, tx);
  path(ry, ty);
  path(rx, "M45 17h5l-2.500 3z", "marker");
  path(ry, "M15 0h3v2z", "marker");
  document.getElementById("grid").setAttribute("d", grid);
  document.getElementById("dots").setAttribute("d", dots);
}

draw();
addEventListener("resize", draw);
```
